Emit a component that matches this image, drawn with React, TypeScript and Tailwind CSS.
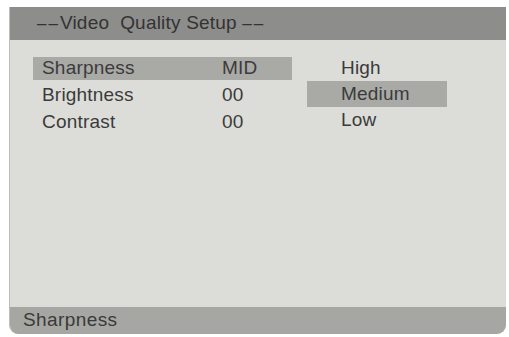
import React from 'react';

const rows = [
  { label: 'Sharpness', value: 'MID', active: true },
  { label: 'Brightness', value: '00', active: false },
  { label: 'Contrast', value: '00', active: false },
];

const options = [
  { label: 'High', active: false },
  { label: 'Medium', active: true },
  { label: 'Low', active: false },
];

const App: React.FC = () => {
  return (
    <div className="w-[509px] h-[337px] bg-white pt-[7px] pl-[9px] font-['Liberation_Sans',Arial,sans-serif] text-[#3b3b3b]">
      <div className="w-[497px] h-[327px] flex flex-col rounded-b-[9px] overflow-hidden border-l border-[#bdbdb9] bg-[#dcddd8]">
        {/* Title bar */}
        <div className="h-[33px] shrink-0 bg-[#8d8d8b] flex items-center pl-[27px] text-[19px] tracking-[0.2px] text-[#333]">
          <span className="tracking-[2px] text-[17px]">––</span>
          Video&nbsp; Quality Setup&nbsp;
          <span className="tracking-[2px] text-[17px]">––</span>
        </div>

        {/* Main area */}
        <div className="flex-1 flex">
          {/* Settings list */}
          <div className="pt-[17px] pl-[23px] flex flex-col gap-[4px]">
            {rows.map(r => (
              <div
                key={r.label}
                className={`w-[259px] h-[23px] flex items-center pl-[9px] text-[19px] tracking-[0.2px] ${
                  r.active ? 'bg-[#a9a9a6]' : ''
                }`}
              >
                <span className="w-[180px]">{r.label}</span>
                <span>{r.value}</span>
              </div>
            ))}
          </div>

          {/* Options */}
          <div className="pt-[15px] pl-[15px] flex flex-col">
            {options.map(o => (
              <div
                key={o.label}
                className={`w-[140px] h-[26px] flex items-center pl-[34px] text-[19px] tracking-[0.2px] ${
                  o.active ? 'bg-[#a9a9a6]' : ''
                }`}
              >
                {o.label}
              </div>
            ))}
          </div>
        </div>

        {/* Status bar */}
        <div className="h-[27px] shrink-0 bg-[#a6a6a2] flex items-center pl-[13px] text-[19px] tracking-[0.4px] text-[#3a3a3a]">
          Sharpness
        </div>
      </div>
    </div>
  );
};

export default App;
